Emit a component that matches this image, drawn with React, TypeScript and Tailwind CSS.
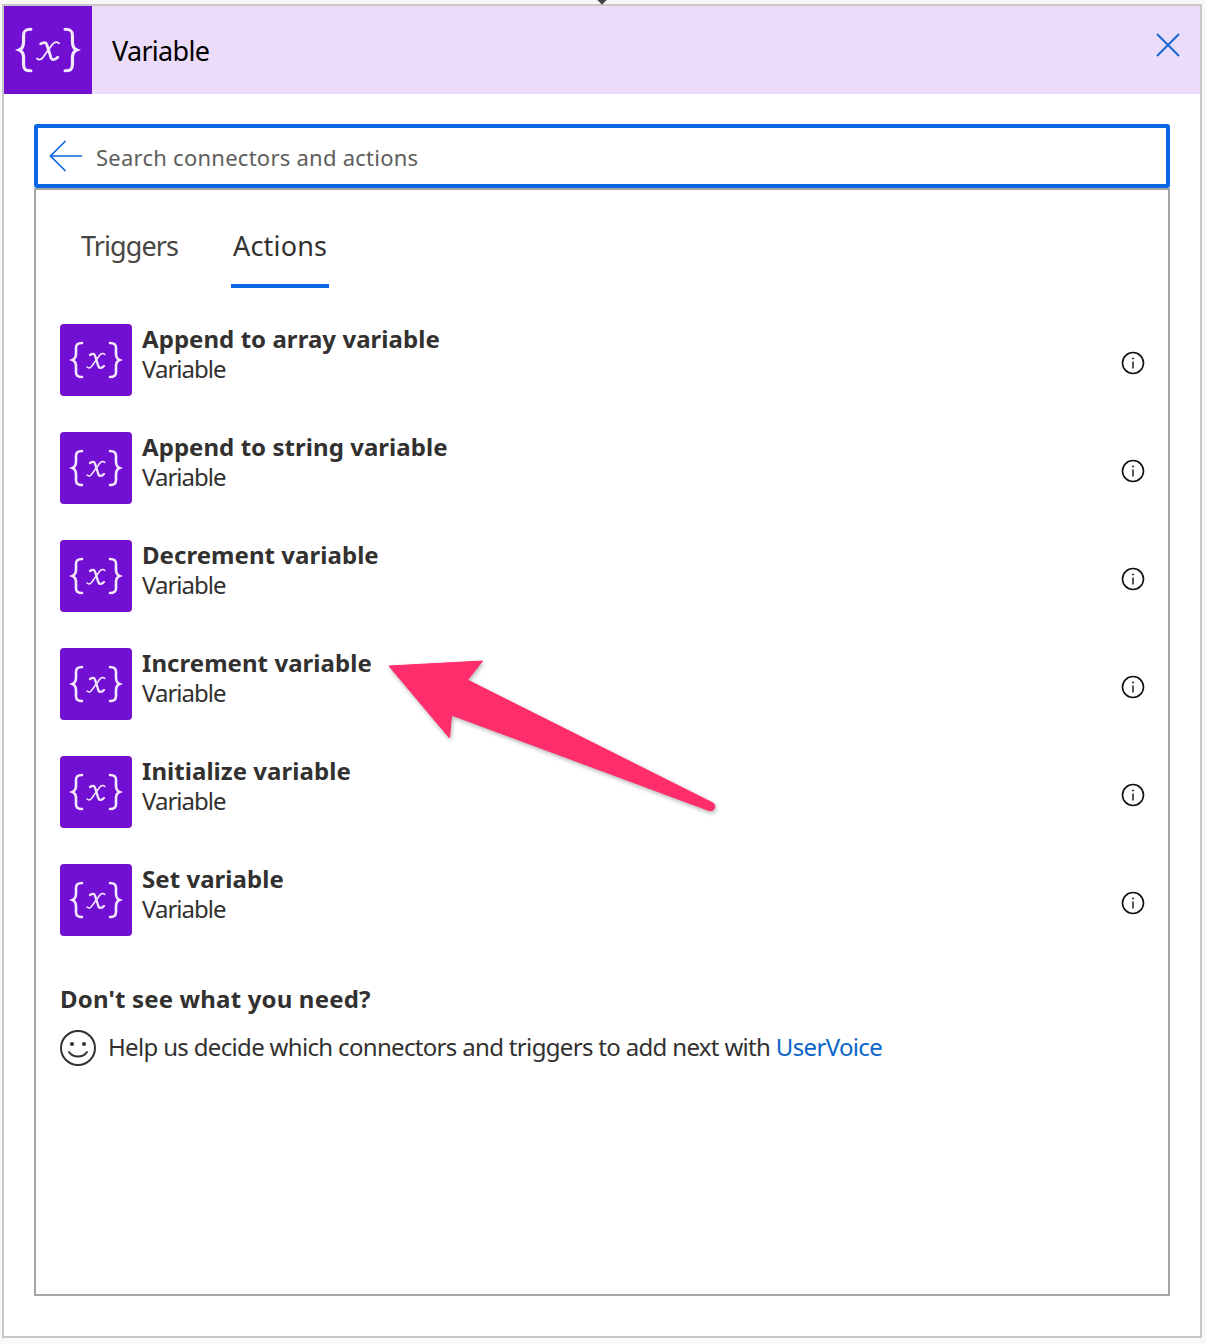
import React from "react";

const actions = [
  "Append to array variable",
  "Append to string variable",
  "Decrement variable",
  "Increment variable",
  "Initialize variable",
  "Set variable",
];

function VariableIcon({ size }: { size: number }) {
  return (
    <svg width={size} height={size} viewBox="0 0 72 72" fill="none" stroke="#f3e9fd" strokeLinecap="round">
      <path strokeWidth="2.600" d="M22 19c-4.500 0-6 1.500-6 5v5.500c0 3.500-1 5.500-3.500 6.500 2.500 1 3.500 3 3.500 6.500V48c0 3.500 1.500 5 6 5" />
      <path strokeWidth="2.600" d="M50 19c4.500 0 6 1.500 6 5v5.500c0 3.500 1 5.500 3.500 6.500-2.500 1-3.500 3-3.500 6.500V48c0 3.500-1.500 5-6 5" />
      <path strokeWidth="2.300" d="M30 31c2.500-1.500 4.500-1.500 5 .5l3.500 11c.8 2 3 2 5.500-.5" />
      <path strokeWidth="1.500" d="M45 30.500c-2-1.500-4-1-5.500 1l-8 11c-1.500 1.800-3 1.800-4.500.5" />
    </svg>
  );
}

function InfoIcon() {
  return (
    <svg width="24" height="24" viewBox="0 0 24 24" fill="none" stroke="#111" strokeWidth="1.6">
      <circle cx="12" cy="12" r="10.500" />
      <path strokeWidth="1.400" d="M12 10.500v7" />
      <circle cx="12" cy="7.500" r=".6" fill="#111" strokeWidth="1" />
    </svg>
  );
}

function ActionRow({ title }: { title: string }) {
  return (
    <div className="flex h-[72px] items-start">
      <div className="flex size-[72px] shrink-0 items-center justify-center rounded bg-[#7110d2]">
        <VariableIcon size={72} />
      </div>
      <div className="ml-2.5 flex-1 text-[#323130]">
        <div className="h-[30px] text-[24px] leading-[30px] font-bold tracking-[0.05px]">{title}</div>
        <div className="text-[24px] leading-[29px] tracking-[-1px]">Variable</div>
      </div>
      <div className="mt-[27px]">
        <InfoIcon />
      </div>
    </div>
  );
}

export default function App() {
  return (
    <div className="relative h-[1344px] overflow-hidden bg-[#f8f8f8] pt-1 pl-0.5 pr-1 pb-1.5 font-['Noto_Sans','Open_Sans',sans-serif]">
      {/* little diamond from the connector above the card */}
      <div className="absolute top-[-5px] left-[598px] size-2 rotate-45 bg-[#444]" />

      <div className="flex h-full flex-col border-2 border-[#c8c8c8] bg-white">
        <div className="flex h-[88px] items-start bg-[#ebdcfa]">
          <div className="bg-[#7110d2]">
            <VariableIcon size={88} />
          </div>
          <span className="mt-[25px] ml-5 flex-1 text-[27px] tracking-[-0.7px] text-black">Variable</span>
          <svg className="mt-[27px] mr-5" width="24" height="24" viewBox="0 0 24 24" stroke="#1b66d6" strokeWidth="2">
            <path d="M1 1l22 22M23 1L1 23" />
          </svg>
        </div>

        <div className="flex flex-1 flex-col px-[30px] pt-[30px] pb-10">
          <div className="flex h-[64px] items-center rounded-[3px] border-4 border-[#0b66e4] pl-[11px]">
            <svg width="34" height="32" viewBox="0 0 34 32" fill="none" stroke="#0b66e4" strokeWidth="1.700">
              <path d="M33 16H2M16.500 1L1.500 16l15 15" />
            </svg>
            <span className="ml-[13px] pt-0.5 text-[22px] tracking-[0.25px] text-[#605e5c]">Search connectors and actions</span>
          </div>

          <div className="flex flex-1 flex-col border-2 border-t-2 border-[#a6a6a6] pr-[23px] pl-6">
            <div className="mt-[22px] flex h-[76px] text-[27px] text-[#323130]">
              <div className="ml-[21px] pt-[14px] tracking-[-0.9px] text-[#484644]">Triggers</div>
              <div className="ml-[53px] flex h-[76px] w-[98px] flex-col items-center border-b-4 border-[#0b66e4] pt-[14px] tracking-[0.2px]">
                Actions
              </div>
            </div>

            <div className="mt-9 flex flex-col gap-9">
              {actions.map((a) => (
                <ActionRow key={a} title={a} />
              ))}
            </div>

            <div className="mt-[47px] text-[24px] leading-8 font-bold tracking-[0.17px] text-[#323130]">
              Don't see what you need?
            </div>
            <div className="mt-[14px] flex items-center text-[24px] text-[#323130]">
              <svg width="36" height="36" viewBox="0 0 36 36" fill="none" stroke="#323130" strokeWidth="2">
                <circle cx="18" cy="18" r="17" />
                <circle cx="12" cy="14" r="2" fill="#323130" stroke="none" />
                <circle cx="24" cy="14" r="2" fill="#323130" stroke="none" />
                <path strokeLinecap="round" d="M9 22c4 6 14 6 18 0" />
              </svg>
              <span className="ml-3 pb-0.5 tracking-[-0.67px]">
                Help us decide which connectors and triggers to add next with{" "}
                <span className="text-[#0b66c8]">UserVoice</span>
              </span>
            </div>
          </div>
        </div>
      </div>

      {/* annotation arrow */}
      <svg
        className="absolute top-[655px] left-[385px] drop-shadow-[1px_2px_2px_rgba(0,0,0,0.3)]"
        width="335"
        height="160"
        viewBox="0 0 335 160"
      >
        <path
          fill="#ff2d6b"
          stroke="#ff2d6b"
          strokeLinejoin="round"
          strokeWidth="1"
          d="M4 11L97.500 6 82.500 25 328 148C332 151 329 157 324 155.500L66.500 60 64.500 83Z"
        />
      </svg>
    </div>
  );
}
